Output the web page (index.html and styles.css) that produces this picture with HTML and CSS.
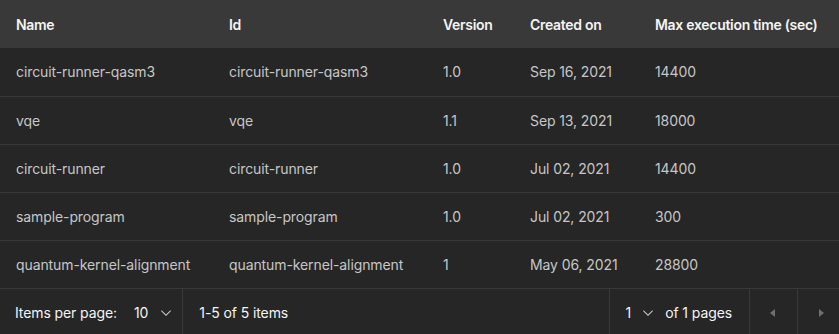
FILE: index.html
```html
<!DOCTYPE html>
<html>
<head>
<meta charset="utf-8">
<link rel="stylesheet" href="styles.css">
</head>
<body>
<div class="wrap">
  <table class="table">
    <colgroup>
      <col class="c1"><col class="c2"><col class="c3"><col class="c4"><col class="c5">
    </colgroup>
    <thead>
      <tr><th>Name</th><th>Id</th><th>Version</th><th>Created on</th><th>Max execution time (sec)</th></tr>
    </thead>
    <tbody>
      <tr><td>circuit-runner-qasm3</td><td>circuit-runner-qasm3</td><td>1.0</td><td>Sep 16, 2021</td><td>14400</td></tr>
      <tr><td>vqe</td><td>vqe</td><td>1.1</td><td>Sep 13, 2021</td><td>18000</td></tr>
      <tr><td>circuit-runner</td><td>circuit-runner</td><td>1.0</td><td>Jul 02, 2021</td><td>14400</td></tr>
      <tr><td>sample-program</td><td>sample-program</td><td>1.0</td><td>Jul 02, 2021</td><td>300</td></tr>
      <tr><td>quantum-kernel-alignment</td><td>quantum-kernel-alignment</td><td>1</td><td>May 06, 2021</td><td>28800</td></tr>
    </tbody>
  </table>
  <div class="pagination">
    <div class="left">
      <span class="label">Items per page:</span>
      <span class="select">10
        <svg class="chev" width="16" height="16" viewBox="0 0 16 16"><path d="M8 11L3 6l.7-.7L8 9.6l4.3-4.3.7.7z" fill="#c6c6c6"/></svg>
      </span>
      <span class="range">1-5 of 5 items</span>
    </div>
    <div class="right">
      <span class="pagesel">1
        <svg class="chev" width="16" height="16" viewBox="0 0 16 16"><path d="M8 11L3 6l.7-.7L8 9.6l4.3-4.3.7.7z" fill="#c6c6c6"/></svg>
        <span class="of">of 1 pages</span>
      </span>
      <button class="nav" aria-label="Previous page"><svg width="16" height="16" viewBox="0 0 16 16"><path d="M10 4v8L5 8z" fill="#6f6f6f"/></svg></button>
      <button class="nav" aria-label="Next page"><svg width="16" height="16" viewBox="0 0 16 16"><path d="M6 4v8l5-4z" fill="#6f6f6f"/></svg></button>
    </div>
  </div>
</div>
</body>
</html>
```
FILE: styles.css
```css
html, body {
  margin: 0;
  padding: 0;
  background: #262626;
  overflow: hidden;
}
body {
  font-family: "Inter", "Noto Sans", sans-serif;
  font-size: 14px;
  letter-spacing: -0.1px;
  color: #c6c6c6;
}
.wrap {
  width: 845px;
}
.table {
  width: 100%;
  border-collapse: collapse;
  table-layout: fixed;
}
.c1 { width: 213px; }
.c2 { width: 214px; }
.c3 { width: 87px; }
.c4 { width: 125px; }
.c5 { width: 206px; }
.table th {
  background: #393939;
  color: #f4f4f4;
  font-weight: 600;
  letter-spacing: -0.3px;
  text-align: left;
  height: 48px;
  padding: 0 16px;
  box-sizing: border-box;
  white-space: nowrap;
}
.table td {
  height: 48px;
  padding: 0 16px;
  box-sizing: border-box;
  border-bottom: 1px solid #393939;
  white-space: nowrap;
}
.pagination {
  display: flex;
  justify-content: space-between;
  height: 48px;
  color: #f4f4f4;
  background: #262626;
  white-space: nowrap;
}
.left, .right {
  display: flex;
  align-items: center;
  height: 100%;
}
.label {
  padding-left: 15px;
}
.select {
  display: flex;
  align-items: center;
  margin-left: 17px;
  padding-right: 8px;
  height: 100%;
  border-right: 1px solid #393939;
}
.select .chev {
  margin-left: 10px;
}
.range {
  padding-left: 16px;
}
.pagesel {
  display: flex;
  align-items: center;
  height: 100%;
  padding: 0 17px 0 16px;
  border-left: 1px solid #393939;
}
.pagesel .chev {
  margin-left: 9px;
}
.of {
  margin-left: 9px;
}
.nav {
  width: 48px;
  height: 100%;
  background: transparent;
  border: 0;
  border-left: 1px solid #393939;
  display: flex;
  align-items: center;
  justify-content: center;
  padding: 0;
}
.nav svg {
  margin-right: 1px;
}
```
